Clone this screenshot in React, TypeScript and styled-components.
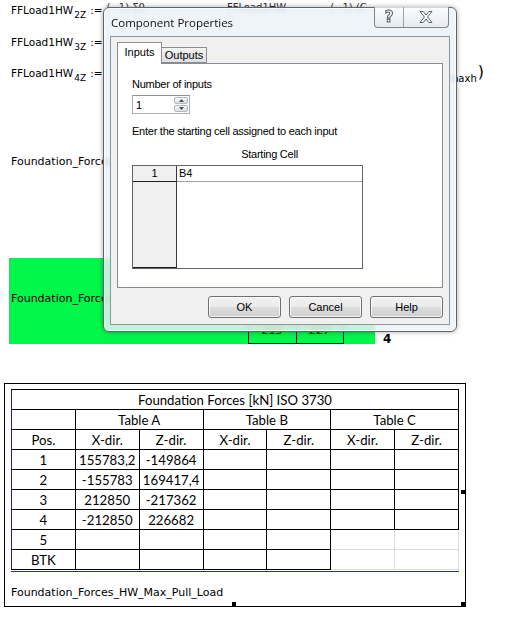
import React from 'react';
import styled, { createGlobalStyle } from 'styled-components';

const GlobalStyle = createGlobalStyle`
  html, body {
    margin: 0;
    padding: 0;
    background: #ffffff;
  }
  body {
    font-family: "DejaVu Sans", Verdana, sans-serif;
    color: #000;
  }
`;

const Page = styled.div`
  position: relative;
  width: 519px;
  height: 628px;
  overflow: hidden;
  background: #fff;
`;

/* ---------- worksheet behind the dialog ---------- */

const Sheet = styled.div`
  display: flex;
  flex-direction: column;
`;

const MathLine = styled.div<{ $gap: number }>`
  display: flex;
  align-items: baseline;
  width: 473px;
  height: 12px;
  margin-top: ${(p) => p.$gap}px;
  padding-left: 11px;
  font-size: 10.5px;
  line-height: 12px;
  white-space: nowrap;
`;

const Formula = styled.span`
  display: block;
`;

const Sub = styled.span`
  font-size: 9px;
  line-height: 0;
  vertical-align: -4px;
  margin-left: 1px;
`;

const Assign = styled.span`
  margin-left: 4px;
`;

const Expr = styled.span<{ $gap: number }>`
  margin-left: ${(p) => p.$gap}px;
  vertical-align: 3px;
  line-height: 0;
  font-size: 10px;
  color: #333;
`;

const BigParen = styled.span`
  font-size: 16px;
  line-height: 0;
  margin-left: 1px;
`;

const TailExpr = styled.span`
  display: block;
  margin-left: auto;
`;

const TailSub = styled.span`
  font-size: 10px;
  line-height: 0;
  vertical-align: -5px;
`;

const Label = styled.div<{ $gap: number }>`
  margin-top: ${(p) => p.$gap}px;
  padding-left: 11px;
  font-size: 11px;
  line-height: 13px;
  height: 13px;
  white-space: nowrap;
`;

const GreenRow = styled.div`
  display: flex;
  align-items: flex-end;
  margin-top: 90px;
  padding-left: 9px;
`;

const GreenBlock = styled.div`
  width: 366px;
  height: 86px;
  background: #00f648;
  display: flex;
  flex-direction: column;
  padding: 34px 0 0 2px;
  box-sizing: border-box;
  font-size: 11px;
  line-height: 13px;
`;

const MiniTable = styled.div`
  margin-top: auto;
  margin-left: 238px;
  display: flex;
`;

const MiniCell = styled.div<{ $w: number }>`
  width: ${(p) => p.$w}px;
  height: 21px;
  box-sizing: border-box;
  border: 1px solid #000;
  margin-left: -1px;
  font-style: italic;
  font-size: 11px;
  line-height: 12px;
  text-align: center;
  padding-top: 1px;
`;

const PageNo = styled.div`
  margin: 0 0 -2px 8px;
  font-weight: bold;
  font-size: 12px;
  line-height: 13px;
`;

/* ---------- report frame ---------- */

const Frame = styled.div`
  position: relative;
  margin: 39px 0 0 4px;
  width: 462px;
  height: 224px;
  box-sizing: border-box;
  border: 1px solid #000;
  padding: 5px 0 0 6px;
`;

const ForceTable = styled.table`
  border-collapse: collapse;
  table-layout: fixed;
  width: 448px;
  font-family: Lato, "Open Sans", sans-serif;
  font-size: 13.2px;
  color: #000;
`;

const Tr = styled.tr`
  height: 20px;
`;

const Td = styled.td<{ $light?: boolean }>`
  padding: 0;
  height: 19px;
  line-height: 18px;
  text-align: center;
  border: 1px solid ${(p) => (p.$light ? '#d9dde3' : '#000')};
  &:first-child {
    border-left-color: #1c1c86;
  }
`;

const BlueRule = styled.div`
  width: 448px;
  height: 0;
  border-top: 1px solid #2a2ab0;
  margin-top: 1px;
`;

const FrameCaption = styled.div`
  margin-top: 14px;
  font-size: 11px;
  line-height: 13px;
`;

const Handle = styled.div<{ $x: number; $y: number }>`
  position: absolute;
  left: ${(p) => p.$x}px;
  top: ${(p) => p.$y}px;
  width: 4px;
  height: 4px;
  background: #000;
`;

/* ---------- dialog ---------- */

const Window = styled.div`
  position: absolute;
  left: 103px;
  top: 7px;
  width: 354px;
  box-sizing: border-box;
  border: 1px solid #5d6670;
  border-radius: 6px;
  background: rgba(236, 241, 247, 0.82);
  backdrop-filter: blur(2px);
  box-shadow: 0 0 5px rgba(0, 0, 0, 0.35), inset 0 0 0 1px rgba(255, 255, 255, 0.7);
  padding: 0 6px 6px 6px;
  font-family: "Liberation Sans", Arial, sans-serif;
  font-size: 11px;
`;

const TitleBar = styled.div`
  position: relative;
  height: 28px;
  display: flex;
  align-items: center;
  padding-left: 1px;
  padding-top: 1px;
  box-sizing: border-box;
`;

const Title = styled.span`
  font-family: "Open Sans", "Noto Sans", sans-serif;
  font-size: 11.5px;
  color: #111;
`;

const CaptionGroup = styled.div`
  position: absolute;
  top: -1px;
  right: 1px;
  display: flex;
  height: 20px;
  border: 1px solid #7c8691;
  border-top: none;
  border-radius: 0 0 4px 4px;
  background: linear-gradient(rgba(255, 255, 255, 0.75), rgba(225, 232, 240, 0.7));
  overflow: hidden;
`;

const CaptionButton = styled.div<{ $w: number }>`
  width: ${(p) => p.$w}px;
  display: flex;
  align-items: center;
  justify-content: center;
  & + & {
    border-left: 1px solid #9aa3ad;
  }
`;

const HelpGlyph = styled.span`
  font-family: "DejaVu Sans", sans-serif;
  font-weight: bold;
  font-size: 15px;
  line-height: 15px;
  color: #fff;
  -webkit-text-stroke: 1px #555c64;
`;

const Client = styled.div`
  background: #f0f0f0;
  border: 1px solid #8d959d;
  padding: 6px;
  display: flex;
  flex-direction: column;
`;

const TabStrip = styled.div`
  display: flex;
  align-items: flex-end;
  height: 20px;
  position: relative;
  z-index: 1;
`;

const Tab = styled.div<{ $active?: boolean }>`
  width: 45px;
  box-sizing: border-box;
  height: ${(p) => (p.$active ? 22 : 16)}px;
  margin-bottom: ${(p) => (p.$active ? -1 : 0)}px;
  border: 1px solid #898c95;
  border-bottom: ${(p) => (p.$active ? 'none' : '1px solid #898c95')};
  border-left: ${(p) => (p.$active ? '1px solid #898c95' : 'none')};
  background: ${(p) => (p.$active ? '#ffffff' : 'linear-gradient(#f3f3f3, #e0e0e0)')};
  display: flex;
  justify-content: center;
  padding-top: ${(p) => (p.$active ? 3 : 1)}px;
  font-size: 11px;
  line-height: 13px;
`;

const Panel = styled.div`
  height: 225px;
  box-sizing: border-box;
  background: #fff;
  border: 1px solid #898c95;
  padding: 14px 0 0 14px;
  display: flex;
  flex-direction: column;
`;

const Text = styled.div<{ $gap?: number }>`
  margin-top: ${(p) => p.$gap ?? 0}px;
  font-size: 11px;
  line-height: 13px;
  letter-spacing: -0.25px;
  white-space: nowrap;
`;

const SpinBox = styled.div`
  margin-top: 4px;
  width: 58px;
  height: 19px;
  box-sizing: border-box;
  border: 1px solid #abadb3;
  border-top-color: #8e9196;
  background: #fff;
  display: flex;
  align-items: center;
  padding: 1px 1px 1px 3px;
`;

const SpinValue = styled.span`
  flex: 1;
  font-size: 11px;
`;

const SpinButtons = styled.div`
  width: 14px;
  height: 15px;
  display: flex;
  flex-direction: column;
  gap: 1px;
`;

const SpinButton = styled.div`
  flex: 1;
  border: 1px solid #b4b8bd;
  border-radius: 2px;
  background: linear-gradient(#f6f6f6, #dcdfe3);
  display: flex;
  align-items: center;
  justify-content: center;
`;

const ColumnTitle = styled.div`
  margin: 10px 0 0 44px;
  width: 187px;
  text-align: center;
  font-size: 11px;
  line-height: 13px;
  letter-spacing: -0.25px;
`;

const CellGrid = styled.div`
  margin-top: 4px;
  width: 231px;
  height: 104px;
  box-sizing: border-box;
  border: 1px solid #646464;
  display: grid;
  grid-template-columns: 44px 1fr;
  grid-template-rows: 16px 1fr;
`;

const RowHead = styled.div`
  background: #f0f0f0;
  border-right: 1px solid #3c3c3c;
  border-bottom: 1px solid #1e1e1e;
  text-align: center;
  font-size: 11px;
  line-height: 15px;
`;

const DataCell = styled.div<{ $first?: boolean }>`
  border-bottom: ${(p) => (p.$first ? '1px solid #a0a0a0' : 'none')};
  padding-left: 2px;
  font-size: 11px;
  line-height: 15px;
`;

const ButtonRow = styled.div`
  margin-top: 8px;
  display: flex;
  justify-content: flex-end;
  gap: 8px;
`;

const PushButton = styled.button`
  width: 73px;
  height: 22px;
  box-sizing: border-box;
  border: 1px solid #707070;
  border-radius: 3px;
  background: linear-gradient(#f2f2f2 0%, #ebebeb 48%, #dddddd 52%, #cfcfcf 100%);
  box-shadow: inset 0 0 0 1px rgba(255, 255, 255, 0.75);
  font-family: "Liberation Sans", Arial, sans-serif;
  font-size: 11px;
  color: #000;
  padding: 0;
`;

const CloseIcon = () => (
  <svg width="16" height="14" viewBox="0 0 16 14">
    <path
      d="M2 1.5h3.2L8 5l2.8-3.5H14L9.6 7 14 12.5h-3.2L8 9l-2.8 3.5H2L6.4 7z"
      fill="#fff"
      stroke="#59616a"
      strokeWidth="1"
      strokeLinejoin="round"
    />
  </svg>
);

const Arrow = ({ up }: { up?: boolean }) => (
  <svg width="5" height="3" viewBox="0 0 5 3">
    <path d={up ? 'M0 3L2.5 0L5 3z' : 'M0 0L2.5 3L5 0z'} fill="#4a4a4a" />
  </svg>
);

const rows: Array<[string, string, string]> = [
  ['1', '155783,2', '-149864'],
  ['2', '-155783', '169417,4'],
  ['3', '212850', '-217362'],
  ['4', '-212850', '226682'],
];

export default function App() {
  return (
    <Page>
      <GlobalStyle />
      <Sheet>
        <MathLine $gap={4}>
          <Formula>
            FFLoad1HW<Sub>2Z</Sub>
            <Assign>:=</Assign>
            <Expr $gap={4}>(−1)·Σ0</Expr>
            <Expr $gap={82}>FFLoad1HW</Expr>
            <Expr $gap={44}>(−1)·(C</Expr>
          </Formula>
        </MathLine>
        <MathLine $gap={20}>
          <Formula>
            FFLoad1HW<Sub>3Z</Sub>
            <Assign>:=</Assign>
          </Formula>
        </MathLine>
        <MathLine $gap={19}>
          <Formula>
            FFLoad1HW<Sub>4Z</Sub>
            <Assign>:=</Assign>
          </Formula>
          <TailExpr>
            e<TailSub>maxh</TailSub>
            <BigParen>)</BigParen>
          </TailExpr>
        </MathLine>
        <Label $gap={76}>Foundation_Forces_HW_Max_Pull_Load</Label>
        <GreenRow>
          <GreenBlock>
            Foundation_Forces_HW_Max_Pull_Load
            <MiniTable>
              <MiniCell $w={49}>215</MiniCell>
              <MiniCell $w={48}>227</MiniCell>
            </MiniTable>
          </GreenBlock>
          <PageNo>4</PageNo>
        </GreenRow>
        <Frame>
          <ForceTable>
            <tbody>
              <Tr>
                <Td colSpan={7}>Foundation Forces [kN] ISO 3730</Td>
              </Tr>
              <Tr>
                <Td />
                <Td colSpan={2}>Table A</Td>
                <Td colSpan={2}>Table B</Td>
                <Td colSpan={2}>Table C</Td>
              </Tr>
              <Tr>
                <Td>Pos.</Td>
                <Td>X-dir.</Td>
                <Td>Z-dir.</Td>
                <Td>X-dir.</Td>
                <Td>Z-dir.</Td>
                <Td>X-dir.</Td>
                <Td>Z-dir.</Td>
              </Tr>
              {rows.map(([pos, x, z]) => (
                <Tr key={pos}>
                  <Td>{pos}</Td>
                  <Td>{x}</Td>
                  <Td>{z}</Td>
                  <Td />
                  <Td />
                  <Td />
                  <Td />
                </Tr>
              ))}
              {['5', 'BTK'].map((pos) => (
                <Tr key={pos}>
                  <Td>{pos}</Td>
                  <Td />
                  <Td />
                  <Td />
                  <Td />
                  <Td $light />
                  <Td $light />
                </Tr>
              ))}
            </tbody>
          </ForceTable>
          <BlueRule />
          <FrameCaption>Foundation_Forces_HW_Max_Pull_Load</FrameCaption>
          <Handle $x={456} $y={106} />
          <Handle $x={227} $y={218} />
          <Handle $x={456} $y={218} />
        </Frame>
      </Sheet>

      <Window>
        <TitleBar>
          <Title>Component Properties</Title>
          <CaptionGroup>
            <CaptionButton $w={28}>
              <HelpGlyph>?</HelpGlyph>
            </CaptionButton>
            <CaptionButton $w={44}>
              <CloseIcon />
            </CaptionButton>
          </CaptionGroup>
        </TitleBar>
        <Client>
          <TabStrip>
            <Tab $active>Inputs</Tab>
            <Tab>Outputs</Tab>
          </TabStrip>
          <Panel>
            <Text>Number of inputs</Text>
            <SpinBox>
              <SpinValue>1</SpinValue>
              <SpinButtons>
                <SpinButton>
                  <Arrow up />
                </SpinButton>
                <SpinButton>
                  <Arrow />
                </SpinButton>
              </SpinButtons>
            </SpinBox>
            <Text $gap={11}>Enter the starting cell assigned to each input</Text>
            <ColumnTitle>Starting Cell</ColumnTitle>
            <CellGrid>
              <RowHead>1</RowHead>
              <DataCell $first>B4</DataCell>
              <RowHead />
              <DataCell />
            </CellGrid>
          </Panel>
          <ButtonRow>
            <PushButton>OK</PushButton>
            <PushButton>Cancel</PushButton>
            <PushButton>Help</PushButton>
          </ButtonRow>
        </Client>
      </Window>
    </Page>
  );
}
